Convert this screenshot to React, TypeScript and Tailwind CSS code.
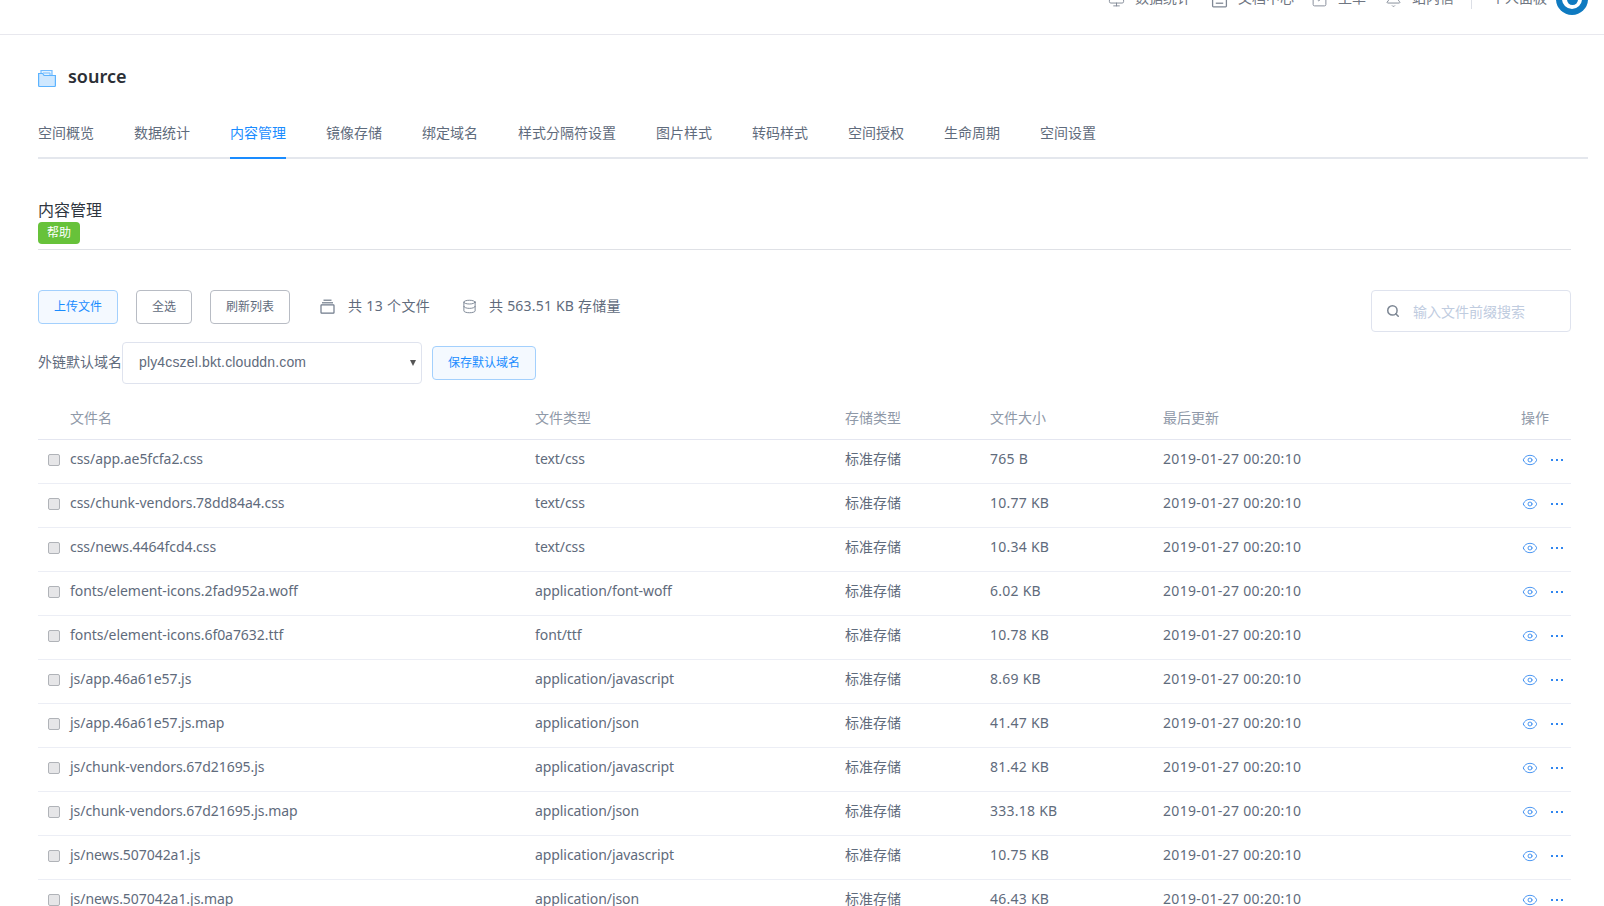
import { Monitor, SquareCheck, Bell, Search, Eye, Database } from 'lucide-react';

const DocIcon = ({ size = 16, className = '' }: { size?: number; className?: string }) => (
  <svg width={size} height={size} viewBox="0 0 16 16" fill="none" stroke="currentColor" strokeWidth="1.2" className={className}>
    <rect x="1.5" y="1" width="13" height="14" rx="0.8" />
    <path d="M4.5 11.5h7" />
  </svg>
);

const topLinks = [
  { icon: Monitor, label: '数据统计', w: 'w-[103px]' },
  { icon: DocIcon, label: '文档中心', w: 'w-[100px]' },
  { icon: SquareCheck, label: '工单', w: 'w-[74px]' },
  { icon: Bell, label: '站内信', w: 'w-[86px]' },
];

const tabs = ['空间概览', '数据统计', '内容管理', '镜像存储', '绑定域名', '样式分隔符设置', '图片样式', '转码样式', '空间授权', '生命周期', '空间设置'];

const files = [
  ['css/app.ae5fcfa2.css', 'text/css', '765 B'],
  ['css/chunk-vendors.78dd84a4.css', 'text/css', '10.77 KB'],
  ['css/news.4464fcd4.css', 'text/css', '10.34 KB'],
  ['fonts/element-icons.2fad952a.woff', 'application/font-woff', '6.02 KB'],
  ['fonts/element-icons.6f0a7632.ttf', 'font/ttf', '10.78 KB'],
  ['js/app.46a61e57.js', 'application/javascript', '8.69 KB'],
  ['js/app.46a61e57.js.map', 'application/json', '41.47 KB'],
  ['js/chunk-vendors.67d21695.js', 'application/javascript', '81.42 KB'],
  ['js/chunk-vendors.67d21695.js.map', 'application/json', '333.18 KB'],
  ['js/news.507042a1.js', 'application/javascript', '10.75 KB'],
  ['js/news.507042a1.js.map', 'application/json', '46.43 KB'],
];

const FolderIcon = () => (
  <svg width="18" height="18" viewBox="0 0 18 18" className="shrink-0">
    <path d="M3 7V1.5h11V7" fill="#e3f2ff" stroke="#74bcff" strokeWidth="1.2" />
    <path d="M5 4h7v3" fill="none" stroke="#74bcff" strokeWidth="1" />
    <path d="M.6 4.5h4l1.5 2h11.3v10a1 1 0 0 1-1 1H1.6a1 1 0 0 1-1-1z" fill="#cfe8ff" stroke="#5cb3ff" strokeWidth="1.2" />
  </svg>
);

const BoxIcon = () => (
  <svg width="15" height="15" viewBox="0 0 15 15" fill="none" stroke="#6f7a8a" strokeWidth="1.2" className="mb-[2px] shrink-0">
    <path d="M3.5 1.2h8" />
    <path d="M2 3.8h11" />
    <rect x="1" y="5.8" width="13" height="8.4" rx="0.6" />
  </svg>
);

export default function App() {
  return (
    <div className="h-[906px] w-[1604px] overflow-hidden bg-white text-[14px] text-[#5f6b7c]" style={{ fontFamily: '"Noto Sans", "Noto Sans CJK SC", sans-serif' }}>
      {/* top bar, scrolled a little so its content is cut off */}
      <div className="flex h-[35px] items-start justify-end overflow-hidden border-b border-[#e8e8ee] pr-[16px]">
        <div className="-mt-[17px] flex items-center">
          {topLinks.map(({ icon: Icon, label, w }) => (
            <div key={label} className={`mb-[4px] flex items-center gap-[10px] text-[#6f7682] ${w}`}>
              <Icon size={17} strokeWidth={1.3} className="mt-[5px] text-[#7f8794]" />
              <span>{label}</span>
            </div>
          ))}
          <div className="mr-[19px] h-[20px] w-px bg-[#dcdfe6]" />
          <span className="mb-[4px] mr-[9px] text-[#6f7682]">个人面板</span>
          <div className="flex h-[32px] w-[32px] items-center justify-center rounded-full bg-[#0f7ac0]">
            <div className="flex h-[20px] w-[20px] items-center justify-center rounded-full bg-white">
              <div className="h-[11px] w-[11px] rounded-full bg-[#0f7ac0]" />
            </div>
          </div>
        </div>
      </div>

      <div className="pl-[38px] pr-[33px]">
        <div className="mt-[34px] flex h-[18px] items-center gap-[12px]">
          <FolderIcon />
          <span className="pb-[4px] text-[18px] font-semibold text-[#2b2f36]">source</span>
        </div>

        <div className="-mr-[17px] mt-[29px] flex h-[43px] gap-[40px] border-b-2 border-[#e4e7ed]">
          {tabs.map((t, i) => (
            <div key={t} className={`h-[43px] pt-[5px] leading-[24px] ${i === 2 ? 'border-b-2 border-[#1a8cff] text-[#1a8cff]' : 'text-[#5f6b7c]'}`}>
              {t}
            </div>
          ))}
        </div>

        <div className="mt-[40px] text-[16px] leading-[22px] text-[#2f3640]">内容管理</div>
        <div className="mt-[1px] flex h-[22px] w-[42px] items-center justify-center rounded-[4px] bg-[#67c23a] text-[12px] text-white">帮助</div>
        <div className="mt-[5px] h-[1px] bg-[#dfe1e6]" />

        <div className="mt-[40px] flex items-start">
          <div className="flex h-[34px] w-[80px] items-center justify-center rounded-[4px] border border-[#a3d0fd] bg-[#f4f9ff] text-[12px] text-[#1a8cff]">上传文件</div>
          <div className="ml-[18px] flex h-[34px] w-[56px] items-center justify-center rounded-[4px] border border-[#b8bcc4] text-[12px] text-[#5f6b7c]">全选</div>
          <div className="ml-[18px] flex h-[34px] w-[80px] items-center justify-center rounded-[4px] border border-[#b8bcc4] text-[12px] text-[#5f6b7c]">刷新列表</div>
          <div className="ml-[30px] flex h-[34px] items-center">
            <BoxIcon />
            <span className="ml-[13px] pb-[3px] tracking-[0.35px]">共 13 个文件</span>
            <Database size={15} strokeWidth={1.4} className="mb-[2px] ml-[32px] text-[#6f7a8a]" />
            <span className="ml-[12px] pb-[3px] tracking-[0.2px]">共 563.51 KB 存储量</span>
          </div>
          <div className="ml-auto flex h-[42px] w-[200px] items-center rounded-[4px] border border-[#dfe3ee] pl-[14px]">
            <Search size={14} strokeWidth={2.6} className="text-[#7d8794]" />
            <span className="ml-[13px] text-[#c0ccdf]">输入文件前缀搜索</span>
          </div>
        </div>

        <div className="mt-[10px] flex items-center">
          <span className="w-[84px] pb-[4px]">外链默认域名</span>
          <div className="flex h-[42px] w-[300px] items-center justify-between rounded-[4px] border border-[#dfe3ee] pl-[16px] pr-[5px]">
            <span className="pb-[1px] font-['Liberation_Sans'] tracking-[0.15px]">ply4cszel.bkt.clouddn.com</span>
            <span className="h-0 w-0 border-x-[3px] border-t-[6px] border-x-transparent border-t-[#555]" />
          </div>
          <div className="ml-[10px] flex h-[34px] w-[104px] items-center justify-center rounded-[4px] border border-[#a3d0fd] bg-[#f4f9ff] text-[12px] text-[#1a8cff]">保存默认域名</div>
        </div>

        <table className="mt-[12px] w-full table-fixed border-collapse">
          <thead>
            <tr className="h-[43px] border-b border-[#e4e6f0] text-left text-[#8f99a8]">
              <th className="w-[32px] font-normal" />
              <th className="w-[465px] font-normal">文件名</th>
              <th className="w-[310px] font-normal">文件类型</th>
              <th className="w-[145px] font-normal">存储类型</th>
              <th className="w-[173px] font-normal">文件大小</th>
              <th className="w-[358px] font-normal">最后更新</th>
              <th className="font-normal">操作</th>
            </tr>
          </thead>
          <tbody>
            {files.map(([name, type, size]) => (
              <tr key={name} className="h-[44px] border-b border-[#eceef5]">
                <td className="pb-[2px] pl-[10px]">
                  <div className="h-[12px] w-[12px] rounded-[2px] border border-[#b0b3b8] bg-[#e6e6e8]" />
                </td>
                <td className="pb-[6px] tracking-[-0.05px]">{name}</td>
                <td className="pb-[6px] tracking-[-0.08px]">{type}</td>
                <td className="pb-[6px]">标准存储</td>
                <td className="pb-[6px] tracking-[0.25px]">{size}</td>
                <td className="pb-[6px] tracking-[0.32px]">2019-01-27 00:20:10</td>
                <td className="pb-[3px]">
                  <div className="flex items-center gap-[13px] pl-[1px] text-[#2f86f0]">
                    <Eye size={16} strokeWidth={1.3} />
                    <div className="flex gap-[3px]">
                      <span className="h-[2px] w-[2px] bg-[#2f86f0]" />
                      <span className="h-[2px] w-[2px] bg-[#2f86f0]" />
                      <span className="h-[2px] w-[2px] bg-[#2f86f0]" />
                    </div>
                  </div>
                </td>
              </tr>
            ))}
          </tbody>
        </table>
      </div>
    </div>
  );
}
